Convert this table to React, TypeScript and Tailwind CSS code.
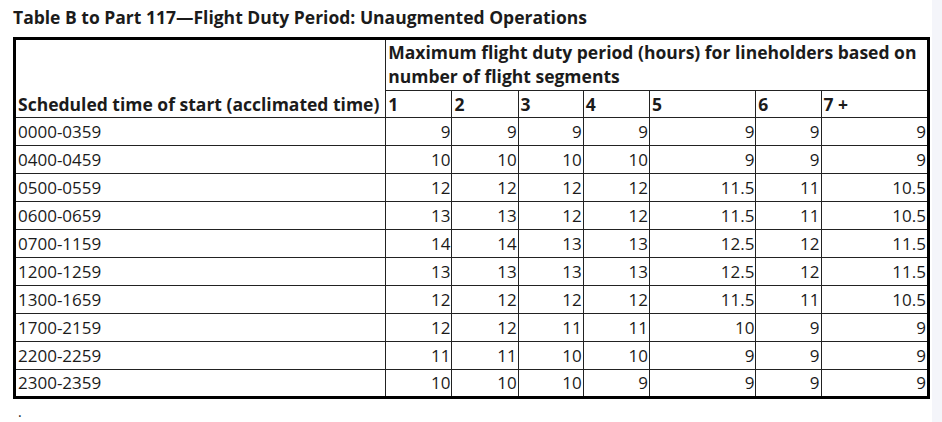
import React from 'react';

const segments = ['1', '2', '3', '4', '5', '6', '7 +'];

const rows: [string, (number | string)[]][] = [
  ['0000-0359', [9, 9, 9, 9, 9, 9, 9]],
  ['0400-0459', [10, 10, 10, 10, 9, 9, 9]],
  ['0500-0559', [12, 12, 12, 12, 11.5, 11, 10.5]],
  ['0600-0659', [13, 13, 12, 12, 11.5, 11, 10.5]],
  ['0700-1159', [14, 14, 13, 13, 12.5, 12, 11.5]],
  ['1200-1259', [13, 13, 13, 13, 12.5, 12, 11.5]],
  ['1300-1659', [12, 12, 12, 12, 11.5, 11, 10.5]],
  ['1700-2159', [12, 12, 11, 11, 10, 9, 9]],
  ['2200-2259', [11, 11, 10, 10, 9, 9, 9]],
  ['2300-2359', [10, 10, 10, 9, 9, 9, 9]],
];

const colWidths = [370, 66, 66, 65, 66, 106, 65, 107];

export default function App() {
  return (
    <div className="flex w-[942px] h-[422px] bg-white text-[#1b1b1b] font-['Open_Sans',sans-serif] overflow-hidden">
      <div className="w-[932px] pl-[13px] pt-[5px]">
        <h2 className="text-[17.5px] font-bold leading-6">
          Table B to Part 117—Flight Duty Period: Unaugmented Operations
        </h2>
        <table className="mt-[8px] w-[917px] table-fixed border-collapse border-[3px] border-black text-[17px] leading-6">
          <colgroup>
            {colWidths.map((w, i) => (
              <col key={i} style={{ width: w }} />
            ))}
          </colgroup>
          <thead>
            <tr className="h-[52px] text-[17.5px]">
              <th rowSpan={2} className="border border-[#222] px-[2px] pb-[1px] text-left align-bottom font-bold">
                Scheduled time of start (acclimated time)
              </th>
              <th colSpan={7} className="border border-[#222] px-[2px] text-left align-top font-bold">
                Maximum flight duty period (hours) for lineholders based on number of flight segments
              </th>
            </tr>
            <tr className="h-[27px] text-[17.5px]">
              {segments.map(s => (
                <th key={s} className="border border-[#222] px-[2px] text-left font-bold">
                  {s}
                </th>
              ))}
            </tr>
          </thead>
          <tbody>
            {rows.map(([time, values]) => (
              <tr key={time} className="h-[28px]">
                <td className="border border-[#222] px-[2px]">{time}</td>
                {values.map((v, i) => (
                  <td key={i} className="border border-[#222] pr-[1px] text-right">
                    {v}
                  </td>
                ))}
              </tr>
            ))}
          </tbody>
        </table>
        <p className="mt-[6px] pl-[5px] text-[14px] leading-[14px]">.</p>
      </div>
      <div className="w-[10px] bg-[#f4f5fa]" />
    </div>
  );
}
